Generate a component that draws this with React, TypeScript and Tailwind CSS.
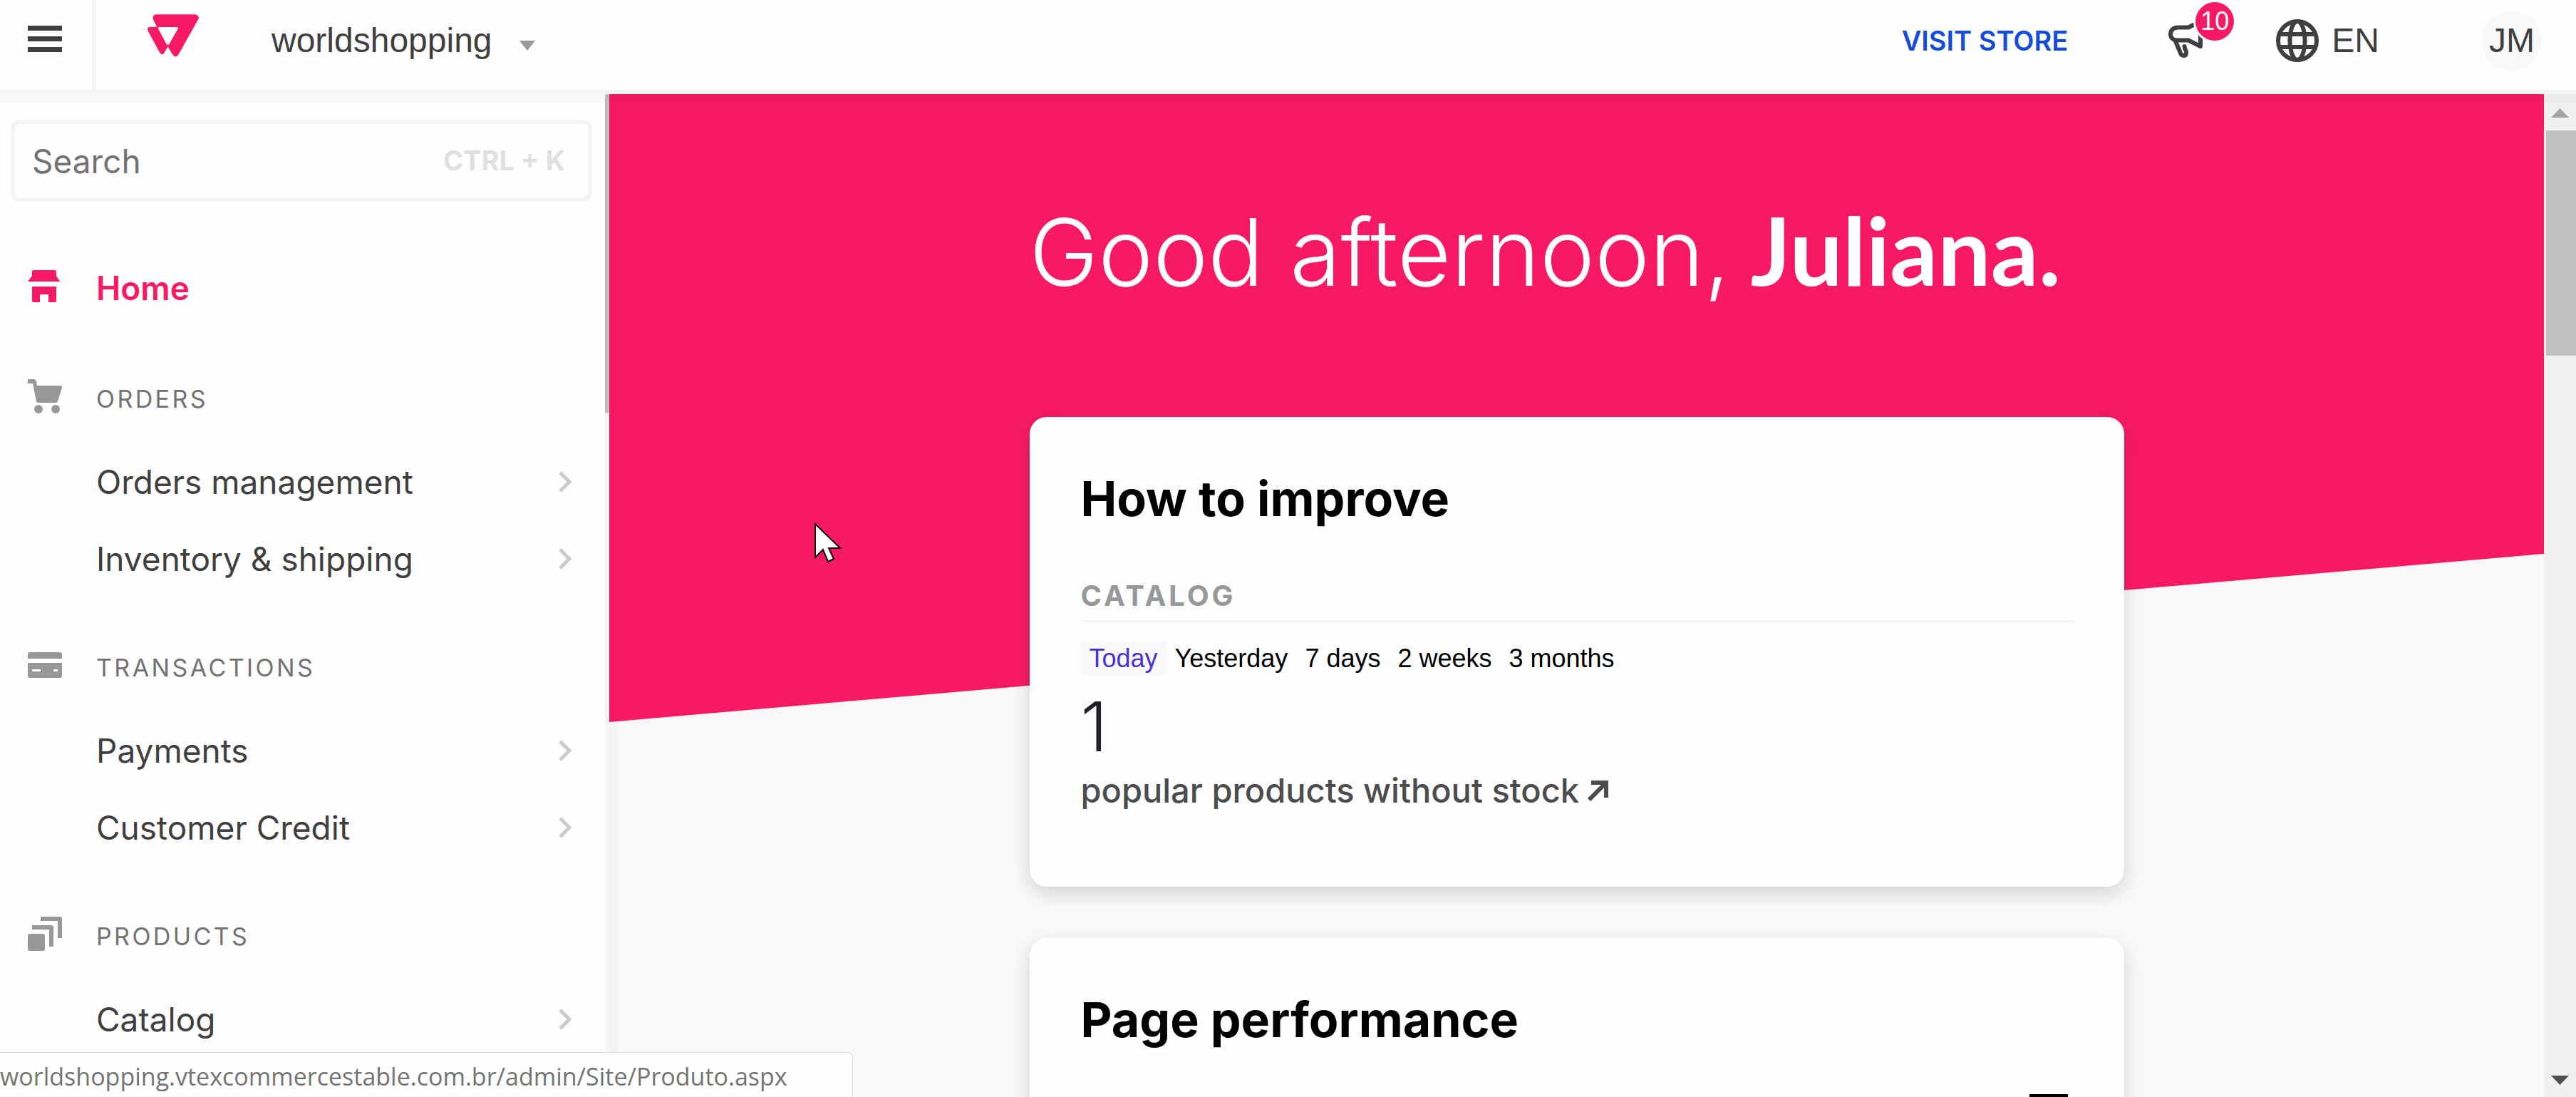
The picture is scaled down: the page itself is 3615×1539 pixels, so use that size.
import React from "react";

function LogoMark() {
  return (
    <svg className="h-[60px] w-[72px]" viewBox="51 60 217 180" aria-hidden="true">
      <path
        fill="#f71963"
        fillRule="evenodd"
        d="M88 60H252Q264 61 268 73Q268 78 264 84L182 230Q170 248 157 230L137 197L122 222Q113 236 103 222L54 132Q45 114 64 113H91L75 82Q70 62 88 60ZM101 114Q95 115 97 122L132 187Q137 192 142 187L179 122Q182 115 175 114Z"
      />
    </svg>
  );
}

function StoreIcon() {
  return (
    <svg className="size-12" viewBox="0 0 48 48" fill="#f71963" aria-hidden="true">
      <path d="M8 3H38Q40 3 40 5V11L45 19H0L6 11V5Q6 3 8 3Z" />
      <path d="M6 26H40V46Q40 48 38 48H29V37H17V48H8Q6 48 6 46Z" />
    </svg>
  );
}

function CartIcon() {
  return (
    <svg className="size-12" viewBox="0 0 48 48" fill="#979899" aria-hidden="true">
      <path d="M0 0H9Q11 0 12 3L13 9H46Q48 9 48 12L42 31Q41 33 39 33H14Q12 33 12 31L7 6H0Z" />
      <circle cx="15" cy="42" r="6" />
      <circle cx="39" cy="42" r="6" />
    </svg>
  );
}

function CardIcon() {
  return (
    <svg className="size-12" viewBox="0 0 48 48" fill="#979899" aria-hidden="true">
      <path d="M3 6H45Q48 6 48 9V15H0V9Q0 6 3 6Z" />
      <path
        fillRule="evenodd"
        d="M0 21H48V39Q48 42 45 42H3Q0 42 0 39ZM6 30V33H18V30ZM36 30V33H42V30Z"
      />
    </svg>
  );
}

function StackIcon() {
  return (
    <svg className="size-12" viewBox="0 0 48 48" fill="#979899" aria-hidden="true">
      <rect x="0" y="24" width="24" height="24" rx="3" />
      <path d="M6 12H33Q36 12 36 15V42H30V18H6Z" />
      <path d="M18 0H45Q48 0 48 3V30H42V6H18Z" />
    </svg>
  );
}

function Chevron() {
  return (
    <svg className="h-[30px] w-[18px]" viewBox="0 0 18 30" fill="none" stroke="#cacbcc" strokeWidth="5" aria-hidden="true">
      <path d="M2 2L15 15L2 28" />
    </svg>
  );
}

function Megaphone() {
  return (
    <svg className="h-[56px] w-[60px]" viewBox="0 0 60 56" fill="none" stroke="#3f3f40" strokeWidth="6" strokeLinejoin="round" aria-hidden="true">
      <path d="M29 9.500H15C7 9.500 4 14 4 19C4 24 8 27.500 14 27.500H29L46 36V1Z" />
      <path d="M11 29L17 43C18 47 20 49 22.500 49C26 49 27 45 25.500 42C24 40 23.500 38 23.500 36" strokeLinecap="round" />
    </svg>
  );
}

function Globe() {
  return (
    <svg className="size-[60px]" viewBox="0 0 60 60" fill="none" stroke="#3f3f40" strokeWidth="6" aria-hidden="true">
      <circle cx="30" cy="30" r="27" />
      <ellipse cx="30" cy="30" rx="10.500" ry="27" />
      <path d="M5 21H55M5 39H55" />
    </svg>
  );
}

function Header() {
  return (
    <header className="relative z-10 flex h-[132px] shrink-0 border-b-[6px] border-[#f3f4f6] bg-[#fefefe] font-['Liberation_Sans',sans-serif] text-[48px] leading-[56px] text-[#3f3f40] shadow-[0_12px_0_rgba(0,0,0,0.02)]">
      <button type="button" aria-label="Toggle menu" className="flex w-[135px] flex-col gap-2 border-r-[6px] border-[#f3f4f6] pt-9 pl-[39px]">
        <span className="h-[7px] w-12 bg-[#3f3f40]" />
        <span className="h-[7px] w-12 bg-[#3f3f40]" />
        <span className="h-[7px] w-12 bg-[#3f3f40]" />
      </button>
      <div className="flex grow items-center pr-12 pb-3 pl-[72px]">
        <a href="#home" aria-label="Admin home" className="mb-3.5">
          <LogoMark />
        </a>
        <button type="button" className="ml-[102px] flex items-center gap-[38px]">
          worldshopping
          <svg className="mt-3.5 h-3.5 w-[22px]" viewBox="0 0 22 14" fill="#979899" aria-hidden="true">
            <path d="M0 0H22L11 14Z" />
          </svg>
        </button>
        <a href="#store" className="ml-auto font-['Inter',sans-serif] text-[38px] font-semibold text-[#134cd8]">
          VISIT STORE
        </a>
        <button type="button" aria-label="Announcements" className="relative ml-[140px]">
          <Megaphone />
          <span className="absolute -top-[26px] left-[39px] flex size-[54px] items-center justify-center rounded-full bg-[#f71963] text-[36px] text-white ring-3 ring-[#fefefe]">
            10
          </span>
        </button>
        <button type="button" className="ml-[92px] flex items-center gap-[18px]">
          <Globe />
          EN
        </button>
        <button type="button" className="ml-36 flex size-[84px] items-center justify-center rounded-full bg-[#f9f9f9]">
          JM
        </button>
      </div>
    </header>
  );
}

const sections = [
  { title: "ORDERS", Icon: CartIcon, items: ["Orders management", "Inventory & shipping"] },
  { title: "TRANSACTIONS", Icon: CardIcon, items: ["Payments", "Customer Credit"] },
  { title: "PRODUCTS", Icon: StackIcon, items: ["Catalog"] },
];

function Sidebar() {
  return (
    <aside className="flex w-[855px] shrink-0 bg-[#fefefe]">
      <div className="min-w-0 grow overflow-hidden pt-9">
        <label className="mr-[18px] ml-[15px] flex h-[115px] items-center rounded-xl border-[6px] border-[#f3f4f6] pr-8 pl-6">
          <input
            type="text"
            aria-label="Search"
            placeholder="Search"
            className="min-w-0 grow bg-transparent text-[46px] leading-[56px] text-[#727273] outline-none placeholder:text-[#727273]"
          />
          <kbd className="shrink-0 font-['Inter',sans-serif] text-[38px] font-bold whitespace-nowrap text-[#dfe0e2]">CTRL + K</kbd>
        </label>
        <nav>
          <a href="#home" className="flex items-start gap-12 pt-[93px] pb-[29px] pl-[39px] text-[46px] leading-[56px] font-semibold text-[#f71963]">
            <StoreIcon />
            Home
          </a>
          {sections.map(({ title, Icon, items }) => (
            <section key={title}>
              <h2 className="flex items-start gap-12 pt-[71px] pb-[34px] pl-[39px] text-[34px] leading-[56px] tracking-widest text-[#727273]">
                <Icon />
                {title}
              </h2>
              <ul>
                {items.map((item) => (
                  <li key={item}>
                    <a href="#section" className="flex h-[108px] items-center justify-between pr-[47px] pl-[135px] text-[46px] leading-[56px] text-[#3f3f40]">
                      {item}
                      <Chevron />
                    </a>
                  </li>
                ))}
              </ul>
            </section>
          ))}
        </nav>
      </div>
      <div className="w-1.5 shrink-0 bg-[#f5f5f6]">
        <div className="h-[448px] rounded-full bg-[#bfbfbf]" />
      </div>
    </aside>
  );
}

const ranges = ["Today", "Yesterday", "7 days", "2 weeks", "3 months"];

function Card({ title, children }: { title: string; children: React.ReactNode }) {
  return (
    <section className="rounded-3xl bg-[#fefefe] px-[72px] pt-[72px] pb-[107px] shadow-[0_9px_27px_rgba(61,62,64,0.2)]">
      <h2 className="text-[68px] leading-[84px] font-bold text-black">{title}</h2>
      {children}
    </section>
  );
}

function Main() {
  return (
    <main className="relative min-w-0 grow overflow-hidden bg-[#f9f9fa] shadow-[inset_12px_0_0_#f3f4f5]">
      <div className="absolute inset-x-0 top-0 h-[881px] bg-[#f71963] [clip-path:polygon(0_0,100%_0,100%_73.2%,0_100%)]" />
      <div className="relative mx-auto max-w-[1536px] pt-[154px]">
        <h1 className="h-32 text-[130px] leading-[128px] font-light whitespace-nowrap text-white">
          Good afternoon,
          <span className="font-['Lato',sans-serif] text-[132px] font-bold"> Juliana.</span>
        </h1>
        <div className="mt-[171px] flex flex-col gap-[72px]">
          <Card title="How to improve">
            <h3 className="mt-[71px] border-b-3 border-[#f3f4f5] pb-2.5 text-[40px] leading-[48px] font-bold tracking-widest text-[#979899]">
              CATALOG
            </h3>
            <div className="mt-[27px] flex font-['Liberation_Sans',sans-serif] text-[36px] leading-[47px] text-black">
              {ranges.map((range, i) => (
                <button
                  key={range}
                  type="button"
                  className={i === 0 ? "bg-[#f9f9fa] px-3 text-[#4a32d0]" : "px-3"}
                >
                  {range}
                </button>
              ))}
            </div>
            <p className="mt-6 text-[96px] leading-[96px] font-light text-[#1d2329]">1</p>
            <a href="#stock" className="mt-3.5 flex items-center gap-3 text-[47px] leading-[56px] font-medium text-[#4b4c4d]">
              popular products without stock
              <svg className="size-[30px]" viewBox="0 0 30 30" fill="none" stroke="#4b4c4d" strokeWidth="6" aria-hidden="true">
                <path d="M5 4H26V25M25 5L2 28" />
              </svg>
            </a>
          </Card>
          <Card title="Page performance">
            <div className="mt-[63px] flex justify-end pr-[7px]">
              <svg className="size-[54px]" viewBox="0 0 54 54" fill="none" stroke="#000" strokeWidth="4" aria-hidden="true">
                <rect x="2" y="2" width="50" height="50" />
              </svg>
            </div>
          </Card>
        </div>
      </div>
    </main>
  );
}

function Scrollbar() {
  return (
    <div className="flex w-[45px] shrink-0 flex-col bg-[#f0f0f0]">
      <button type="button" aria-label="Scroll up" className="flex h-[51px] items-end justify-center pb-[18px]">
        <svg className="h-[13px] w-[25px]" viewBox="0 0 25 13" fill="#a3a3a3" aria-hidden="true">
          <path d="M0 13L12.500 0L25 13Z" />
        </svg>
      </button>
      <div className="ml-[3px] h-[316px] bg-[#c1c1c1]" />
      <button type="button" aria-label="Scroll down" className="mt-auto flex h-[47px] items-end justify-center pb-[17px]">
        <svg className="h-[13px] w-[25px]" viewBox="0 0 25 13" fill="#505050" aria-hidden="true">
          <path d="M0 0H25L12.500 13Z" />
        </svg>
      </button>
    </div>
  );
}

export default function App() {
  return (
    <div className="relative flex h-screen flex-col overflow-hidden bg-[#fefefe] font-['Inter',sans-serif]">
      <Header />
      <div className="flex min-h-0 grow">
        <Sidebar />
        <Main />
        <Scrollbar />
      </div>
      <div className="absolute bottom-0 left-0 z-20 h-[63px] w-[1197px] rounded-tr-lg border-t border-r border-[#dcdcdc] bg-[#fefefe] pt-2 font-['Open_Sans',sans-serif] text-[34px] leading-[50px] whitespace-nowrap text-[#747474]">
        worldshopping.vtexcommercestable.com.br/admin/Site/Produto.aspx
      </div>
      <svg className="absolute top-[732px] left-[1142px] z-30 h-[58px] w-10" viewBox="0 0 40 58" fill="#fff" stroke="#000" strokeWidth="2" aria-hidden="true">
        <path d="M2 3V50L13 39L20 56L28 52L21 37H37Z" />
      </svg>
    </div>
  );
}
